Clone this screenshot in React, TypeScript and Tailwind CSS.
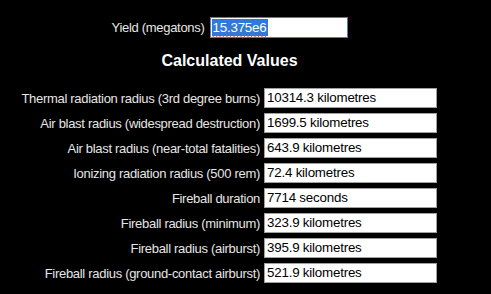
import React from "react";

const rows: [string, string][] = [
  ["Thermal radiation radius (3rd degree burns)", "10314.3 kilometres"],
  ["Air blast radius (widespread destruction)", "1699.5 kilometres"],
  ["Air blast radius (near-total fatalities)", "643.9 kilometres"],
  ["Ionizing radiation radius (500 rem)", "72.4 kilometres"],
  ["Fireball duration", "7714 seconds"],
  ["Fireball radius (minimum)", "323.9 kilometres"],
  ["Fireball radius (airburst)", "395.9 kilometres"],
  ["Fireball radius (ground-contact airburst)", "521.9 kilometres"],
];

export default function App() {
  return (
    <div
      className="w-[491px] h-[294px] bg-black overflow-hidden"
      style={{ fontFamily: '"Liberation Sans", Arial, sans-serif' }}
    >
      <div className="ml-[20px] w-[419px] pt-[17px] flex flex-col">
        <div className="flex items-center justify-center gap-[5px] h-[21px]">
          <span className="text-[13px] tracking-[-0.3px] text-[#e6e6e6] leading-[15px]">Yield (megatons)</span>
          <div className="w-[138px] h-[21px] bg-white border border-[#4f7cc6] flex items-center pl-[1px]">
            <span className="bg-[#3278d8] text-white text-[13.33px] tracking-[-0.2px] leading-[17px] h-[17px] px-[1px] underline decoration-wavy decoration-red-500 decoration-1 underline-offset-2">
              15.375e6
            </span>
          </div>
        </div>
        <div className="mt-[13px] h-[20px] leading-[20px] text-center text-[16px] font-bold text-white">
          Calculated Values
        </div>
        <div className="mt-[17px] flex flex-col gap-[5px]">
          {rows.map(([label, value]) => (
            <div key={label} className="flex items-center gap-[4px] h-[20px]">
              <div className="w-[240px] text-right text-[13px] tracking-[-0.3px] text-[#e6e6e6] whitespace-nowrap leading-[15px]">
                {label}
              </div>
              <div className="w-[173px] h-[20px] bg-white border border-[#a0a0a0] flex items-center pl-[2px] text-[13.33px] tracking-[-0.2px] text-black leading-[16px] whitespace-nowrap">
                {value}
              </div>
            </div>
          ))}
        </div>
      </div>
    </div>
  );
}
